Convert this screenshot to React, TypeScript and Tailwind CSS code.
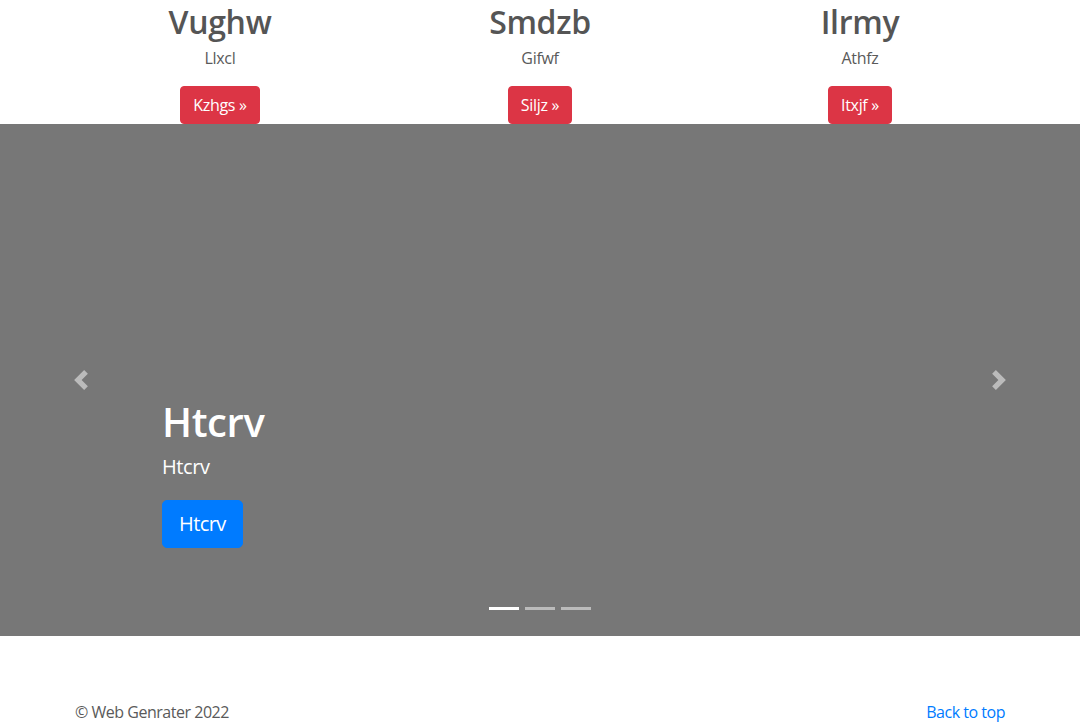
import React from "react";

const font = { fontFamily: '"Open Sans", "Noto Sans", Arial, sans-serif' };

function Col({ title, sub, btn }: { title: string; sub: string; btn: string }) {
  return (
    <div className="w-1/3 px-[15px] text-center">
      <h2 className="text-[32px] leading-[1.2] font-semibold pt-[3px] mb-[5px] text-[#555] tracking-[-0.01em]">{title}</h2>
      <p className="text-base leading-6 mb-4 text-[#5a5a5a] tracking-[-0.02em]">{sub}</p>
      <span className="inline-block bg-[#dc3545] text-white text-base leading-6 px-3 py-[6px] border border-[#dc3545] rounded tracking-[-0.02em]">
        {btn} &raquo;
      </span>
    </div>
  );
}

export default function App() {
  return (
    <div className="bg-white text-[#5a5a5a] min-h-[724px]" style={font}>
      <div className="w-[960px] mx-auto flex">
        <Col title="Vughw" sub="Llxcl" btn="Kzhgs" />
        <Col title="Smdzb" sub="Gifwf" btn="Siljz" />
        <Col title="Ilrmy" sub="Athfz" btn="Itxjf" />
      </div>
      <div className="relative h-[512px] bg-[#777] mb-16">
        <div className="absolute inset-y-0 left-0 w-[15%] flex items-center justify-center opacity-50">
          <svg width="20" height="20" viewBox="0 0 8 8" fill="#fff">
            <path d="M5.25 0l-4 4 4 4 1.5-1.5L4.25 4l2.5-2.5L5.25 0z" />
          </svg>
        </div>
        <div className="absolute inset-y-0 right-0 w-[15%] flex items-center justify-center opacity-50">
          <svg width="20" height="20" viewBox="0 0 8 8" fill="#fff">
            <path d="M2.75 0l-1.5 1.5L3.75 4l-2.5 2.5L2.75 8l4-4-4-4z" />
          </svg>
        </div>
        <div className="absolute left-[15%] right-[15%] bottom-[88px] text-white">
          <h1 className="text-[40px] leading-[1.2] font-semibold mb-2 tracking-[-0.01em]">Htcrv</h1>
          <p className="text-[20px] leading-[30px] mb-4 tracking-[-0.02em] -translate-y-[2px]">Htcrv</p>
          <span className="inline-block bg-[#007bff] text-white text-[20px] leading-[30px] px-4 py-2 border border-[#007bff] rounded-[5px] tracking-[-0.03em]">
            Htcrv
          </span>
        </div>
        <div className="absolute bottom-[26px] left-0 right-0 flex justify-center">
          <span className="w-[30px] h-[3px] mx-[3px] bg-white" />
          <span className="w-[30px] h-[3px] mx-[3px] bg-white opacity-50" />
          <span className="w-[30px] h-[3px] mx-[3px] bg-white opacity-50" />
        </div>
      </div>
      <footer className="w-[960px] mx-auto px-[15px] flex justify-between text-base leading-6 tracking-[-0.03em]">
        <p>&copy; Web Genrater 2022</p>
        <p className="text-[#007bff]">Back to top</p>
      </footer>
    </div>
  );
}
